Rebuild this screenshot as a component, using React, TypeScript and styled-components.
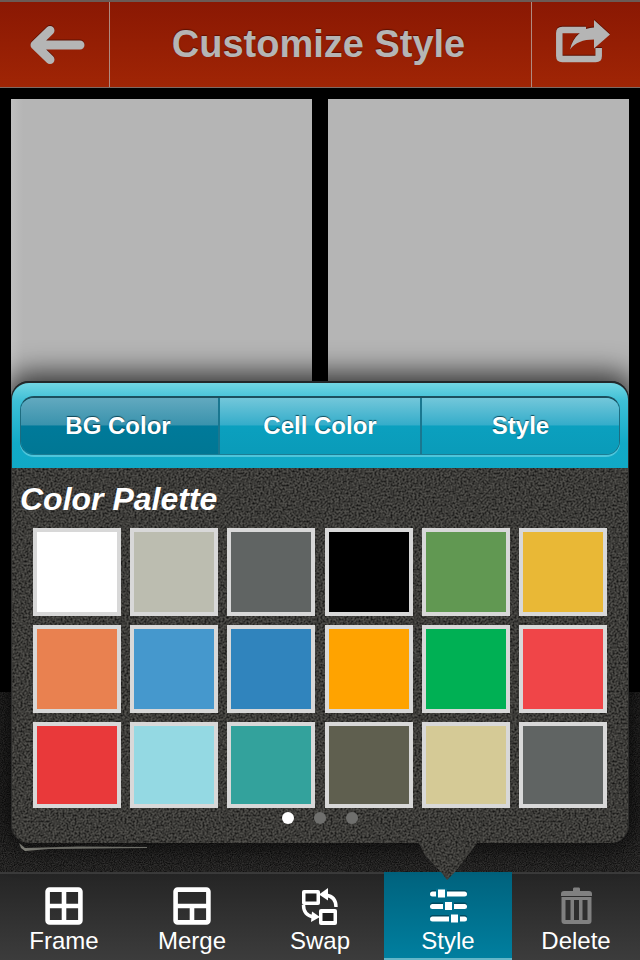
import React from "react";
import styled, { createGlobalStyle } from "styled-components";

const noiseSvg = (freq: number, gain: number, bias: number) =>
  `url("data:image/svg+xml,${encodeURIComponent(
    `<svg xmlns='http://www.w3.org/2000/svg' width='256' height='256'><filter id='n' x='0' y='0' width='100%' height='100%'><feTurbulence type='fractalNoise' baseFrequency='${freq}' numOctaves='2' stitchTiles='stitch'/><feColorMatrix values='0 0 0 0 0 0 0 0 0 0 0 0 0 0 0 ${gain} 0 0 0 ${bias}'/></filter><rect width='256' height='256' filter='url(#n)'/></svg>`
  )}")`;

const coarseNoise = noiseSvg(0.5, 1.6, -0.55);
const fineNoise = noiseSvg(0.9, 1.4, -0.4);

const Global = createGlobalStyle`
  html, body { margin: 0; padding: 0; background: #000; }
  * { box-sizing: border-box; }
  body { font-family: "Liberation Sans", Arial, sans-serif; }
`;

const Page = styled.div`
  position: relative;
  width: 640px;
  height: 960px;
  overflow: hidden;
  display: flex;
  flex-direction: column;
  background: #000;
`;

const Header = styled.header`
  height: 88px;
  flex: none;
  display: grid;
  grid-template-columns: 110px 1fr 109px;
  background: linear-gradient(#8a1803, #a02505);
  border-top: 2px solid #6b5a55;
  border-bottom: 1px solid #7c6a64;
`;

const HeaderCell = styled.div<{ $divider?: "left" | "right" }>`
  display: flex;
  align-items: center;
  justify-content: center;
  ${(p) => p.$divider === "right" && "border-right: 1px solid #b08a80;"}
  ${(p) => p.$divider === "left" && "border-left: 1px solid #b08a80; padding-right: 5px;"}
  ${(p) => !p.$divider && "padding-right: 4px;"}
`;

const Title = styled.h1`
  margin: 0;
  font-size: 38px;
  font-weight: 700;
  color: #b5b5b5;
  text-shadow: 0 -1px 1px #5c1002;
`;

const HeaderIcon = styled.svg`
  display: block;
  overflow: visible;
  filter: drop-shadow(0 -1px 0 #5c1002);
`;

const Canvas = styled.main`
  height: 604px;
  flex: none;
  padding: 11px 11px 0;
  display: grid;
  grid-template-columns: 301px 301px;
  column-gap: 16px;
  background: #000;
`;

const Cell = styled.div<{ $first?: boolean }>`
  background: ${(p) => (p.$first ? "linear-gradient(90deg, #bfbfbf, #b5b5b5 12px)" : "#b5b5b5")};
`;

const Tray = styled.div`
  flex: 1;
  padding: 151px 0 0 19px;
  background-color: #333231;
  background-image: ${fineNoise};
`;

const Toolbar = styled.nav`
  height: 88px;
  flex: none;
  display: grid;
  grid-template-columns: repeat(5, 128px);
  background: linear-gradient(#252525, #3c3c3c);
  border-top: 2px solid #3b3b3b;
`;

const Tool = styled.div<{ $active?: boolean }>`
  display: flex;
  flex-direction: column;
  align-items: center;
  padding-top: 12px;
  margin-top: ${(p) => (p.$active ? "-2px" : "0")};
  ${(p) => p.$active && `
    padding-top: 14px;
    background: linear-gradient(#00627d, #007f9f);
    border-bottom: 2px solid #63b6c8;
  `}
`;

const ToolIcon = styled.svg`
  display: block;
  flex: none;
`;

const ToolLabel = styled.span`
  margin-top: 0;
  font-size: 24px;
  line-height: 30px;
  color: #fff;
`;

const Popover = styled.section`
  position: absolute;
  left: 11px;
  top: 381px;
  width: 618px;
  height: 462px;
  display: flex;
  flex-direction: column;
  border-radius: 18px;
  box-shadow: 0 -2px 28px 6px rgba(0, 0, 0, 0.72), inset 1px 0 #2b2b2a, inset -1px 0 #2b2b2a;
  background-color: #504f4b;
  background-image: ${coarseNoise};
`;

const Tail = styled.div`
  position: absolute;
  left: 407px;
  top: 461px;
  width: 60px;
  height: 38px;
  clip-path: polygon(0 0, 60px 0, 56px 5px, 50px 13px, 37px 30px, 29px 38px, 23px 30px, 7px 13px, 3px 5px);
  background-color: #504f4b;
  background-image: ${coarseNoise};
`;

const PopoverHead = styled.div`
  height: 87px;
  flex: none;
  padding: 13px 8px;
  border-style: solid;
  border-color: #23282a;
  border-width: 2px 1px 0;
  border-radius: 18px 18px 0 0;
  background: linear-gradient(#72d6e3 0, #3ebfd6 18px, #12aac8 60px, #10a9c6 100%);
`;

const Segments = styled.div`
  height: 59px;
  display: grid;
  grid-template-columns: 199px 202px 197px;
  border-radius: 14px;
  overflow: hidden;
  border-top: 2px solid #1c4f5e;
  border-left: 1px solid #1d6c80;
  border-right: 1px solid #1d6c80;
  border-bottom: 1px solid #1c7d94;
  box-shadow: 0 2px 0 rgba(130, 220, 235, 0.55);
`;

const Segment = styled.div<{ $active?: boolean; $last?: boolean }>`
  display: flex;
  align-items: center;
  justify-content: center;
  padding-right: ${(p) => (p.$active ? "3px" : "0")};
  font-size: 24px;
  font-weight: 700;
  color: #fff;
  text-shadow: 0 -1px 1px rgba(0, 50, 65, 0.8);
  ${(p) => !p.$last && "border-right: 2px solid #1a7790;"}
  background: ${(p) =>
    p.$active
      ? "linear-gradient(#62a9bf 0, #3a93ad 48%, #007a9a 50%, #007794 100%)"
      : "linear-gradient(#73c7da 0, #35adca 48%, #0ba0bf 50%, #0a9bb9 100%)"};
`;

const PopoverBody = styled.div`
  flex: 1;
  display: flex;
  flex-direction: column;
  padding: 14px 0 0 9px;
`;

const PaletteTitle = styled.h2`
  margin: 0;
  height: 34px;
  line-height: 34px;
  font-size: 32px;
  font-weight: 700;
  font-style: italic;
  color: #fff;
`;

const Swatches = styled.div`
  margin: 12px 0 0 13px;
  display: grid;
  grid-template-columns: repeat(6, 88px);
  grid-template-rows: 88px 88px 86px;
  column-gap: 9.2px;
  row-gap: 9px;
`;

const Swatch = styled.div<{ $color: string }>`
  border: 4px solid #d8d8d8;
  background: ${(p) => p.$color};
`;

const Dots = styled.div`
  margin: 4px 0 0 -9px;
  display: flex;
  justify-content: center;
  gap: 20px;
`;

const Dot = styled.span<{ $on?: boolean }>`
  width: 12px;
  height: 12px;
  border-radius: 50%;
  background: ${(p) => (p.$on ? "#fff" : "#6f6f6d")};
`;

const colors = [
  "#ffffff", "#bcbdb0", "#606463", "#000000", "#619852", "#e9b836",
  "#e98150", "#4598cd", "#3084bd", "#ffa300", "#00b054", "#f04548",
  "#e9393a", "#94d9e3", "#33a29c", "#5f5f4f", "#d5ca96", "#606463",
];

const FrameIcon = () => (
  <ToolIcon width="40" height="40" viewBox="0 0 40 40" fill="none" stroke="#fff" strokeWidth="4.6">
    <rect x="3.6" y="3.6" width="32.8" height="32.8" rx="2" />
    <path d="M20 3v34M3 20h34" />
  </ToolIcon>
);

const MergeIcon = () => (
  <ToolIcon width="40" height="40" viewBox="0 0 40 40" fill="none" stroke="#fff" strokeWidth="4.6">
    <rect x="3.6" y="3.6" width="32.8" height="32.8" rx="2" />
    <path d="M3 20h34M20 20v17" />
  </ToolIcon>
);

const SwapIcon = () => (
  <ToolIcon width="40" height="40" viewBox="0 0 40 40" fill="none">
    <rect x="2" y="4" width="18" height="15" rx="2" fill="#fff" />
    <rect x="5.500" y="7.500" width="11" height="8" fill="#1f1f1f" />
    <rect x="19" y="23" width="18" height="16" rx="2" fill="#fff" />
    <rect x="22.500" y="27" width="11" height="8" fill="#1f1f1f" />
    <path d="M3.500 19c0 7 4 11 10 12" stroke="#fff" strokeWidth="3.4" />
    <path d="M12 25.500l8 5.500-9 5z" fill="#fff" />
    <path d="M36 21c0-7-4-11-10-12" stroke="#fff" strokeWidth="3.4" />
    <path d="M28 2l-9 6.500 9 6z" fill="#fff" />
  </ToolIcon>
);

const Slider = ({ y, knob }: { y: number; knob: number }) => (
  <>
    <rect x="2" y={y - 3.5} width="37" height="5" rx="2.5" fill="#004a60" />
    <rect x="2" y={y - 2} width="37" height="5" rx="2.5" fill="#fff" />
    <rect x={knob - 2} y={y - 5} width="11" height="9" fill="#007090" />
    <rect x={knob} y={y - 4} width="7" height="8" fill="#fff" />
  </>
);

const StyleIcon = () => (
  <ToolIcon width="40" height="40" viewBox="0 0 40 40" fill="none">
    <Slider y={7.5} knob={10} />
    <Slider y={20} knob={17} />
    <Slider y={32.5} knob={23} />
  </ToolIcon>
);

const TrashIcon = () => (
  <ToolIcon width="40" height="40" viewBox="0 0 40 40" fill="none">
    <path d="M17 5v-2q0-1.500 1-1.500h5q1 0 1 1.500v2z" fill="#808080" />
    <path d="M5 10v-2q0-3 3-3h25q3 0 3 3v2z" fill="#808080" />
    <path d="M5.500 11h30v24q0 3-3 3h-24q-3 0-3-3z" fill="#808080" />
    <path d="M9.500 14h5v20h-5zM18 14h5v20h-5zM26.500 14h5v20h-5z" fill="#2e2e2e" />
  </ToolIcon>
);

export default function App() {
  return (
    <Page>
      <Global />
      <Header>
        <HeaderCell $divider="right">
          <HeaderIcon width="60" height="46" viewBox="0 0 60 46" fill="none" stroke="#b5b5b5" strokeWidth="9" strokeLinecap="round" strokeLinejoin="round">
            <path d="M25 8.500L10 23l15 14.500M10 23h45" />
          </HeaderIcon>
        </HeaderCell>
        <HeaderCell>
          <Title>Customize Style</Title>
        </HeaderCell>
        <HeaderCell $divider="left">
          <HeaderIcon width="56" height="50" viewBox="0 0 56 50" fill="none">
            <path d="M30 10H6.300Q3.300 10 3.300 13V36Q3.300 39 6.300 39H39.700Q42.700 39 42.700 36V28" stroke="#b5b5b5" strokeWidth="6.500" />
            <path d="M38 0L54 14.500 38 28.500V19.500C27 19.500 19 22.500 14 29.500 17 16.500 27 7.500 38 7.500Z" fill="#b5b5b5" />
          </HeaderIcon>
        </HeaderCell>
      </Header>
      <Canvas>
        <Cell $first />
        <Cell />
      </Canvas>
      <Tray>
        <svg width="130" height="9" viewBox="0 0 130 9" style={{ display: "block" }}>
          <path d="M0 0L6 5 60 3.500 128 4V5L30 6 6 8 2 5z" fill="#a8a89e" />
        </svg>
      </Tray>
      <Toolbar>
        <Tool><FrameIcon /><ToolLabel>Frame</ToolLabel></Tool>
        <Tool><MergeIcon /><ToolLabel>Merge</ToolLabel></Tool>
        <Tool><SwapIcon /><ToolLabel>Swap</ToolLabel></Tool>
        <Tool $active><StyleIcon /><ToolLabel>Style</ToolLabel></Tool>
        <Tool><TrashIcon /><ToolLabel>Delete</ToolLabel></Tool>
      </Toolbar>
      <Popover>
        <Tail />
        <PopoverHead>
          <Segments>
            <Segment $active>BG Color</Segment>
            <Segment>Cell Color</Segment>
            <Segment $last>Style</Segment>
          </Segments>
        </PopoverHead>
        <PopoverBody>
          <PaletteTitle>Color Palette</PaletteTitle>
          <Swatches>
            {colors.map((c, i) => (
              <Swatch key={i} $color={c} />
            ))}
          </Swatches>
          <Dots>
            <Dot $on />
            <Dot />
            <Dot />
          </Dots>
        </PopoverBody>
      </Popover>
    </Page>
  );
}
